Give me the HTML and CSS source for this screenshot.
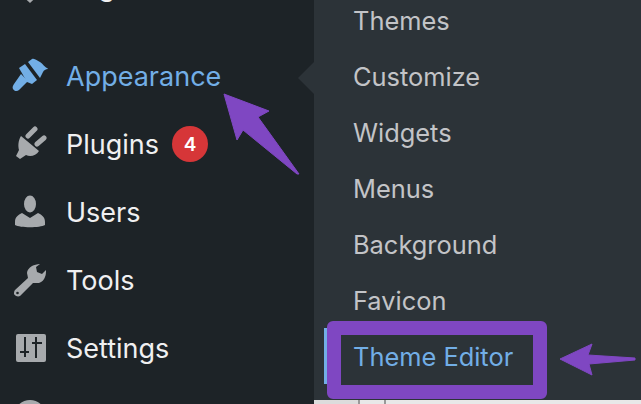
FILE: index.html
```html
<!DOCTYPE html>
<html lang="en">
<head>
    <meta charset="UTF-8">
    <title>Appearance menu</title>
    <link rel="stylesheet" href="styles.css">
</head>
<body>
    <div class="screen">
        <div class="sidebar">
            <ul class="menu">
                <li class="menu-item">
                    <svg class="icon" viewBox="0 0 36 36"><path fill="#a7aaad" d="M4 22H32L18 35z"/></svg>
                    <span>Pages</span>
                </li>
                <li class="menu-item active">
                    <svg class="icon" viewBox="0 0 36 36"><path fill="#72aee6" d="M16 4L20 1C23 0 25 3 28 4C31 6 33 10 37 11C34 11 32 12 31 14C30 16 29 18 28 20z"/><path fill="#72aee6" d="M7 10L13 6L25 22L20 26L15 24z"/><path fill="#72aee6" d="M9 16L16 23L7 32C5 34 2 33 1 31C0 29 1 28 2 26z"/><path fill="none" stroke="#1d2327" stroke-width="1.500" d="M14 4L27 22"/></svg>
                    <span>Appearance</span>
                </li>
                <li class="menu-item">
                    <svg class="icon" viewBox="0 0 36 36"><path fill="none" stroke="#a7aaad" stroke-width="5" stroke-linecap="round" d="M16 10L23 3M25 18L32 12"/><path fill="#a7aaad" d="M9 10L27 25C24 30 18 31 14 29L8 33L4 30L7 24C6 20 6 15 9 10z"/></svg>
                    <span>Plugins</span>
                    <span class="count">4</span>
                </li>
                <li class="menu-item">
                    <svg class="icon" viewBox="0 0 36 36"><ellipse fill="#a7aaad" cx="18" cy="10" rx="6" ry="8.500"/><path fill="#a7aaad" d="M10 19L18 24L26 19C30 21 33 23 33 28V31C28 34 8 34 3 31V28C3 23 6 21 10 19z"/></svg>
                    <span>Users</span>
                </li>
                <li class="menu-item">
                    <svg class="icon" viewBox="0 0 36 36"><path fill="#a7aaad" d="M28 2C25 2 22 3 20 4C17 6 15 8 15 11L16 16L3 28C2 29 2 31 2 32C3 34 6 35 8 34L21 21L27 21C30 20 32 18 33 15C34 13 34 10 34 8L30 12L25 10L24 5z"/><circle fill="#1d2327" cx="5.500" cy="31" r="1.300"/></svg>
                    <span>Tools</span>
                </li>
                <li class="menu-item">
                    <svg class="icon" viewBox="0 0 36 36"><rect fill="#a7aaad" x="4" y="4" width="30" height="28" rx="2"/><path fill="none" stroke="#1d2327" stroke-width="2" d="M13 7V27M8 22H17M24 7V28M20 13H30"/></svg>
                    <span>Settings</span>
                </li>
                <li class="menu-item">
                    <svg class="icon" viewBox="0 0 36 36"><circle fill="#a7aaad" cx="18" cy="18" r="16"/></svg>
                </li>
            </ul>
        </div>
        <div class="main">
            <div class="submenu-panel">
                <ul class="submenu">
                    <li>Themes</li>
                    <li>Customize</li>
                    <li>Widgets</li>
                    <li>Menus</li>
                    <li>Background</li>
                    <li>Favicon</li>
                    <li class="current">Theme Editor</li>
                </ul>
            </div>
            <div class="page-strip">
                <div class="strip-cell first"></div>
                <div class="strip-cell second"></div>
            </div>
        </div>

        <!-- annotations on top of the screenshot -->
        <div class="highlight"></div>
        <svg class="arrow arrow-up" viewBox="0 0 77 83"><path fill="#7f47c2" stroke="#7f47c2" stroke-linejoin="round" d="M1 1L46 18L35 24L76 81L74 81L20 37L14 47z"/></svg>
        <svg class="arrow arrow-left" viewBox="0 0 78 33"><path fill="#7f47c2" stroke="#7f47c2" stroke-linejoin="round" d="M1 16L33 1L29 12L76 15V17L30 21L33 32z"/></svg>
    </div>
</body>
</html>
```
FILE: styles.css
```css
* {
    box-sizing: border-box;
}
body {
    margin: 0;
    background-color: #1d2327;
    font-family: "Inter", "Liberation Sans", sans-serif;
}
ul {
    list-style: none;
    margin: 0;
    padding: 0;
}
.screen {
    position: relative;
    display: flex;
    width: 641px;
    height: 404px;
    overflow: hidden;
}
.sidebar {
    width: 314px;
    flex-shrink: 0;
    background-color: #1d2327;
}
.menu {
    margin-top: -48px;
}
.menu-item {
    display: flex;
    align-items: center;
    gap: 18px;
    height: 68px;
    padding-left: 12px;
    font-size: 27px;
    color: #f0f0f1;
}
.menu-item.active {
    color: #72aee6;
    margin-top: 22px;
}
.icon {
    width: 36px;
    height: 36px;
    flex-shrink: 0;
}
.count {
    display: flex;
    align-items: center;
    justify-content: center;
    width: 36px;
    height: 36px;
    margin-left: -5px;
    border-radius: 50%;
    background-color: #d63638;
    color: #fff;
    font-size: 19px;
    font-weight: 600;
}
.main {
    flex: 1;
    display: flex;
    flex-direction: column;
}
.submenu-panel {
    position: relative;
    flex: 1;
    background-color: #2c3338;
    padding-left: 39px;
}
.submenu-panel::before {
    content: "";
    position: absolute;
    left: -16px;
    top: 62px;
    border: 16px solid transparent;
    border-left-width: 0;
    border-right-color: #2c3338;
}
.submenu {
    margin-top: -8px;
}
.submenu li {
    position: relative;
    display: flex;
    align-items: center;
    height: 56px;
    font-size: 25.400px;
    color: #c3c4c7;
}
.submenu li.current {
    color: #72aee6;
}
.submenu li.current::before {
    content: "";
    position: absolute;
    left: -29px;
    top: 0;
    width: 4px;
    height: 56px;
    background-color: #72aee6;
}
.page-strip {
    display: flex;
    height: 4px;
    background-color: #e8e8e8;
}
.strip-cell {
    border-right: 2px solid #999;
}
.strip-cell.first {
    width: 46px;
    background-color: #dcdcdc;
}
.strip-cell.second {
    width: 26px;
}
.highlight {
    position: absolute;
    left: 327px;
    top: 321px;
    width: 220px;
    height: 78px;
    border: 14px solid #7f47c2;
    border-radius: 6px;
}
.arrow {
    position: absolute;
}
.arrow-up {
    left: 223px;
    top: 93px;
    width: 77px;
    height: 83px;
}
.arrow-left {
    left: 559px;
    top: 343px;
    width: 78px;
    height: 33px;
}
```
